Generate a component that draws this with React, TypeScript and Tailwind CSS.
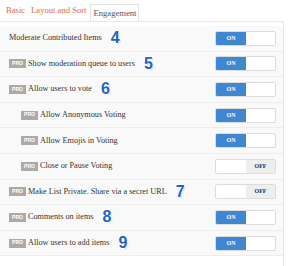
import React from "react";

type Row = {
  label: string;
  pro: boolean;
  indent: boolean;
  on: boolean;
  num?: string;
};

const rows: Row[] = [
  { label: "Moderate Contributed Items", pro: false, indent: false, on: true, num: "4" },
  { label: "Show moderation queue to users", pro: true, indent: false, on: true, num: "5" },
  { label: "Allow users to vote", pro: true, indent: false, on: true, num: "6" },
  { label: "Allow Anonymous Voting", pro: true, indent: true, on: true },
  { label: "Allow Emojis in Voting", pro: true, indent: true, on: true },
  { label: "Close or Pause Voting", pro: true, indent: true, on: false },
  { label: "Make List Private. Share via a secret URL", pro: true, indent: false, on: false, num: "7" },
  { label: "Comments on items", pro: true, indent: false, on: true, num: "8" },
  { label: "Allow users to add items", pro: true, indent: false, on: true, num: "9" },
];

function Toggle({ on }: { on: boolean }) {
  return (
    <div className="flex h-[15px] w-[61px] overflow-hidden rounded-[2px] border border-[#dcdcdc] bg-white">
      {on ? (
        <>
          <div className="flex w-[30px] items-center justify-center bg-[#3f87d0] text-[6px] font-bold text-white">
            ON
          </div>
          <div className="flex-1 bg-white" />
        </>
      ) : (
        <>
          <div className="w-[30px] bg-white" />
          <div className="flex flex-1 items-center justify-center bg-[#eeeeee] text-[6px] font-bold text-[#333]">
            OFF
          </div>
        </>
      )}
    </div>
  );
}

export default function App() {
  return (
    <div
      className="relative h-[266px] w-[289px] overflow-hidden bg-white"
      style={{ fontFamily: '"Liberation Serif", serif' }}
    >
      <div className="flex h-[21px] items-end pl-[6px] text-[8.6px]">
        <div className="mb-[4px] mr-[6px] text-[#e8663d]">Basic</div>
        <div className="mb-[4px] mr-[4px] text-[#e8663d]">Layout and Sort</div>
        <div className="flex h-[17px] items-center border border-b-0 border-[#e2e2e2] bg-white px-[2px] text-[#555]">
          Engagement
        </div>
      </div>
      <div className="mr-[5px] h-[245px] border-r border-t border-[#e8e8e8] pt-[4px]">
        {rows.map((r, i) => (
          <div
            key={i}
            className="flex h-[25.6px] items-center border-b border-[#ededed] bg-[#f9f9f9] pr-[7px]"
          >
            <div
              className={`flex flex-1 items-center text-[8.2px] text-[#333] ${
                r.indent ? "pl-[21px]" : "pl-[9px]"
              }`}
            >
              {r.pro && (
                <span
                  className="mr-[2px] flex h-[9px] w-[17px] items-center justify-center bg-[#aaaaaa] text-[5px] font-bold text-white"
                  style={{ fontFamily: '"Liberation Sans", sans-serif' }}
                >
                  PRO
                </span>
              )}
              <span className="whitespace-nowrap">{r.label}</span>
              {r.num && (
                <span
                  className="ml-[9px] text-[16px] font-bold leading-none text-[#2563c0]"
                  style={{
                    fontFamily: '"Liberation Sans", sans-serif',
                    textShadow:
                      "1px 0 0 #fff, -1px 0 0 #fff, 0 1px 0 #fff, 0 -1px 0 #fff, 1px 1px 1px rgba(0,0,0,0.25)",
                  }}
                >
                  {r.num}
                </span>
              )}
            </div>
            <Toggle on={r.on} />
          </div>
        ))}
      </div>
    </div>
  );
}
